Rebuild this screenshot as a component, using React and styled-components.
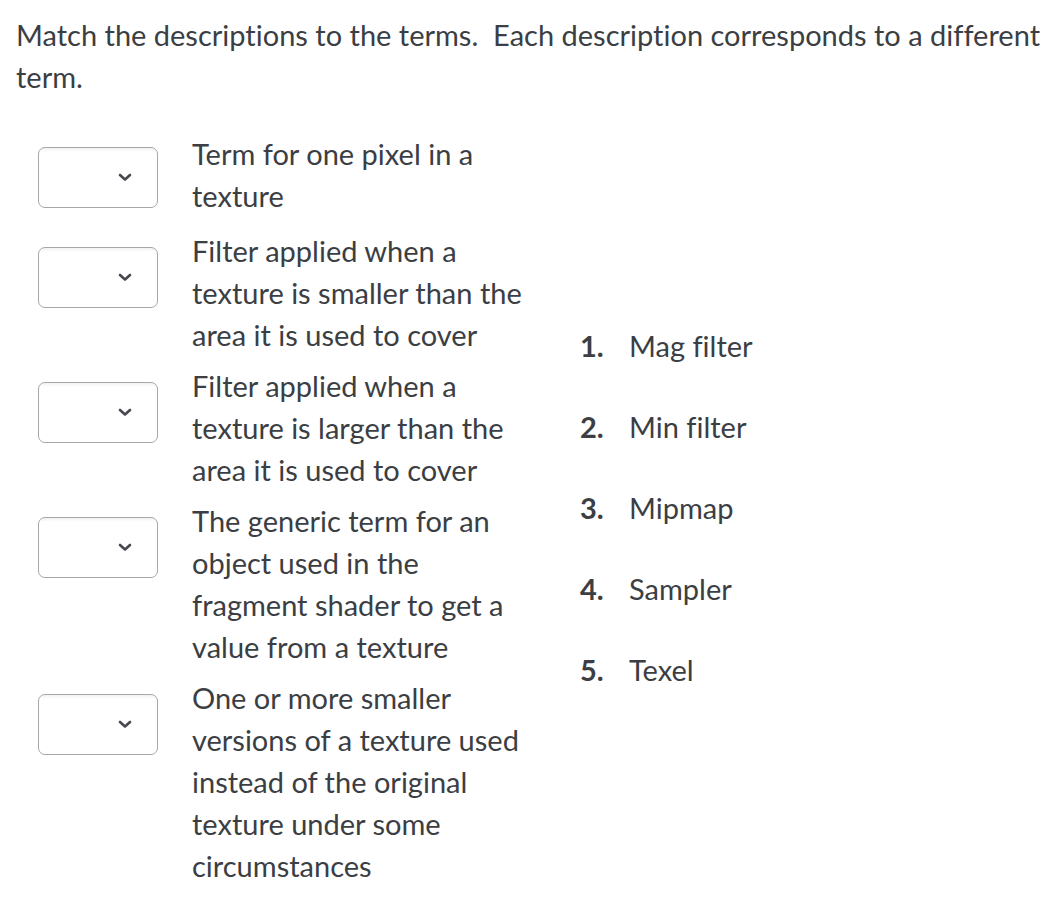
import styled, { createGlobalStyle } from "styled-components";

const descriptions = [
    "Term for one pixel in a texture",
    "Filter applied when a texture is smaller than the area it is used to cover",
    "Filter applied when a texture is larger than the area it is used to cover",
    "The generic term for an object used in the fragment shader to get a value from a texture",
    "One or more smaller versions of a texture used instead of the original texture under some circumstances",
];

const terms = ["Mag filter", "Min filter", "Mipmap", "Sampler", "Texel"];

function Chevron() {
    return (
        <svg width="14" height="9" viewBox="0 0 14 9">
            <path d="M2 2 L7 6.5 L12 2" fill="none" stroke="#45484d" strokeWidth="2.6" strokeLinecap="round" strokeLinejoin="round" />
        </svg>
    );
}

function App() {
    return (
        <Page>
            <GlobalStyle />
            <Question>
                Match the descriptions to the terms.&nbsp; Each description corresponds to a different term.
            </Question>
            <Matching>
                <Left>
                    {descriptions.map((d, i) => (
                        <Row key={i} first={i === 0}>
                            <Select first={i === 0}>
                                <Chevron />
                            </Select>
                            <Description>{d}</Description>
                        </Row>
                    ))}
                </Left>
                <Terms>
                    {terms.map((t, i) => (
                        <Term key={t}>
                            <Num>{i + 1}.</Num>
                            <span>{t}</span>
                        </Term>
                    ))}
                </Terms>
            </Matching>
        </Page>
    );
}

const GlobalStyle = createGlobalStyle`
body {
    margin: 0;
    background: #fff;
}
`;

const Page = styled.div`
padding: 14px 16px 0 16px;
font-family: Lato, "Open Sans", sans-serif;
font-size: 29px;
line-height: 42px;
color: #3b3e43;
font-variant-ligatures: none;
`;

const Question = styled.p`
margin: 0;
`;

const Matching = styled.div`
display: flex;
align-items: center;
margin-top: 35px;
`;

const Left = styled.div`
display: flex;
flex-direction: column;
gap: 9px;
`;

const Row = styled.div`
display: flex;
align-items: flex-start;
margin-bottom: ${(p) => (p.first ? "4px" : "0")};
`;

const Select = styled.div`
width: 120px;
height: 61px;
box-sizing: border-box;
margin: ${(p) => (p.first ? "14px" : "17px")} 34px 0 22px;
border: 1px solid #a4a7ab;
border-radius: 7px;
background: linear-gradient(#f2f2f2, #fff 4px);
display: flex;
align-items: center;
justify-content: flex-end;
padding-right: 25px;
`;

const Description = styled.div`
width: 345px;
`;

const Terms = styled.ol`
list-style: none;
margin: 0 0 4px 43px;
padding: 0;
display: flex;
flex-direction: column;
gap: 39px;
`;

const Term = styled.li`
display: flex;
`;

const Num = styled.span`
font-weight: bold;
width: 49px;
`;

export default App
